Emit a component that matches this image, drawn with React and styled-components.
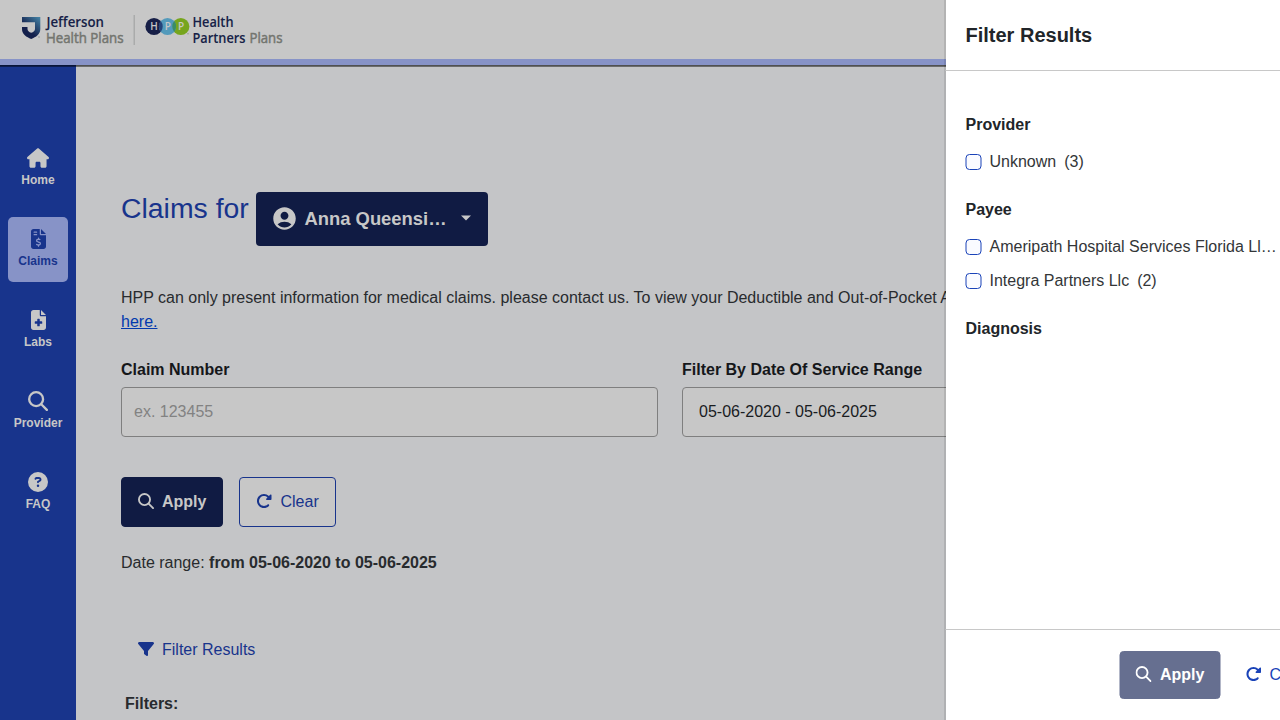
import React from "react";
import styled, { createGlobalStyle, css } from "styled-components";
import {
  FaHouse,
  FaFileInvoiceDollar,
  FaFileMedical,
  FaCircleQuestion,
  FaRotateRight,
  FaFilter,
} from "react-icons/fa6";
import { MdAccountCircle } from "react-icons/md";

const color = {
  page: "#c4c5c7",
  surface: "#c7c7c7",
  blue: "#18348c",
  brand: "#1a43b8",
  navy: "#101b43",
  lilac: "#8793c7",
  text: "#282b2e",
};

const GlobalStyle = createGlobalStyle`
  *, *::before, *::after { box-sizing: border-box; }
  html, body { margin: 0; height: 720px; overflow: hidden; }
  body {
    font-family: "Liberation Sans", Arial, sans-serif;
    font-size: 16px;
    line-height: 24px;
    color: ${color.text};
    background: ${color.page};
  }
  svg { display: block; flex: none; }
`;

const Page = styled.div`
  display: flex;
  flex-direction: column;
  height: 720px;
  overflow: hidden;
`;

const Header = styled.header`
  position: relative;
  z-index: 1;
  flex: none;
  height: 65px;
  background: ${color.surface};
  border-bottom: 6px solid ${color.lilac};
  box-shadow: 0 1px 0 rgba(0, 0, 0, 0.25), 0 2px 0 rgba(0, 0, 0, 0.45);
`;

const Body = styled.div`
  display: flex;
  flex: 1;
  min-height: 0;
`;

const Sidebar = styled.nav`
  display: flex;
  flex-direction: column;
  flex: none;
  gap: 16px;
  width: 76px;
  padding: 71px 8px 0;
  background: ${color.blue};
`;

const NavItem = styled.a`
  display: flex;
  flex-direction: column;
  align-items: center;
  height: 65px;
  padding-top: 12px;
  border-radius: 5px;
  font-size: 12px;
  font-weight: 700;
  line-height: 18px;
  color: ${(p) => (p.$active ? color.blue : color.surface)};
  background: ${(p) => (p.$active ? color.lilac : "transparent")};
  svg { width: ${(p) => p.$iconWidth}px; height: 20px; margin-bottom: 3px; }
`;

const Main = styled.main`
  flex: none;
  width: 1204px;
  padding: 127px 45px 0;
`;

const TitleRow = styled.div`
  display: flex;
  gap: 8px;
`;

const Title = styled.h1`
  margin: 0;
  font-size: 28.4px;
  font-weight: 400;
  line-height: 32px;
  width: 127px;
  white-space: nowrap;
  color: ${color.blue};
`;

const MemberButton = styled.button`
  display: flex;
  align-items: center;
  width: 232px;
  height: 54px;
  padding: 0 16px 1px 15px;
  border: 0;
  border-radius: 4px;
  font: 700 18.4px/24px "Liberation Sans", Arial, sans-serif;
  color: ${color.surface};
  background: ${color.navy};
`;

const MemberName = styled.span`
  flex: 1;
  margin-left: 6.5px;
  text-align: left;
`;

const Notice = styled.p`
  width: 1100px;
  margin: 40px 0 0;
  white-space: nowrap;
  a { color: #0339ae; text-decoration: underline; }
`;

const Fields = styled.div`
  display: flex;
  gap: 24px;
  margin-top: 24px;
`;

const Field = styled.label`
  display: block;
  width: 537px;
  font-weight: 700;
  color: #15171a;
`;

const Input = styled.input`
  display: block;
  width: 100%;
  height: 50px;
  margin-top: 5px;
  padding: 0 ${(p) => p.$inset || 12}px;
  border: 1px solid #7f7f7f;
  border-radius: 4px;
  font: 400 16px/24px "Liberation Sans", Arial, sans-serif;
  color: #191c1f;
  background: ${color.surface};
  &::placeholder { color: #828282; opacity: 1; }
`;

const Actions = styled.div`
  display: flex;
  gap: 16px;
  margin-top: 40px;
`;

const variants = {
  solid: css`
    color: ${color.surface};
    background: ${color.navy};
    border-color: ${color.navy};
    font-weight: 700;
  `,
  outline: css`
    gap: 8.5px;
    color: ${color.blue};
    background: ${color.surface};
    border-color: ${color.blue};
  `,
  disabled: css`
    gap: 8.5px;
    padding: 0 15px;
    color: #fff;
    background: #152356;
    border-color: #152356;
    font-weight: 700;
    opacity: 0.65;
  `,
  link: css`
    color: ${color.brand};
    background: transparent;
    border-color: transparent;
  `,
};

const Button = styled.button`
  display: flex;
  align-items: center;
  flex: none;
  gap: 8px;
  height: ${(p) => p.$height || 50}px;
  width: ${(p) => p.$width}px;
  padding: 0 16px;
  border: 1px solid;
  border-radius: 4px;
  font: 400 16px/24px "Liberation Sans", Arial, sans-serif;
  ${(p) => variants[p.$variant]}
  svg { margin-bottom: 2px; }
`;

const DateRange = styled.p`
  margin: 24px 0 0;
`;

const FilterLink = styled.a`
  display: flex;
  align-items: center;
  gap: 8px;
  margin: 63px 0 0 17px;
  color: ${color.blue};
  svg { margin-bottom: 2px; }
`;

const FiltersLabel = styled.div`
  margin: 30px 0 0 4px;
  font-weight: 700;
`;

const Drawer = styled.aside`
  position: fixed;
  z-index: 2;
  top: 0;
  right: 0;
  display: flex;
  flex-direction: column;
  width: 400px;
  height: 720px;
  border-left: 1px solid rgba(0, 0, 0, 0.2);
  background: #fff padding-box;
  color: #212529;
  transform: translateX(64.5px);
`;

const DrawerHeader = styled.div`
  height: 71px;
  padding: 20px 20px 0;
  border-bottom: 1px solid #c8c8c8;
  font-size: 20px;
  font-weight: 700;
  line-height: 30px;
`;

const DrawerBody = styled.div`
  flex: 1;
  padding: 42px 20px 0;
`;

const DrawerFooter = styled.div`
  display: flex;
  gap: 8px;
  height: 91px;
  padding: 21px 0 0 174px;
  border-top: 1px solid #c8c8c8;
`;

const GroupTitle = styled.h2`
  margin: 0 0 13px;
  font-size: 16px;
  font-weight: 700;
  line-height: 24px;
`;

const Group = styled.section`
  margin-bottom: 24px;
`;

const Option = styled.label`
  display: flex;
  align-items: center;
  height: 24px;
  margin-bottom: ${(p) => (p.$last ? 0 : 10)}px;
  color: #333638;
  white-space: pre;
`;

const Checkbox = styled.span`
  width: 16px;
  height: 16px;
  margin-right: 8px;
  border: 1px solid ${color.brand};
  border-radius: 4px;
  background: #fafbff;
`;

const OptionCount = styled.span`
  margin-left: 8px;
`;

function SearchIcon({ size = 16 }) {
  return (
    <svg width={size} height={size} viewBox="0 0 512 512" fill="none" stroke="currentColor" strokeWidth="60" strokeLinecap="round">
      <circle cx="208" cy="208" r="178" />
      <path d="M340 340L482 482" />
    </svg>
  );
}

function Logo() {
  const fit = { lengthAdjust: "spacingAndGlyphs" };
  return (
    <svg width="300" height="58" viewBox="0 0 300 58" fontFamily="'Open Sans', 'Noto Sans', sans-serif" fontSize="14.2">
      <defs>
        <linearGradient id="shield" x1="0.2" y1="0.9" x2="0.9" y2="0">
          <stop offset="0.3" stopColor="#14204c" />
          <stop offset="1" stopColor="#427fa2" />
        </linearGradient>
      </defs>
      <path
        d="M22 17H40.3V29C40.3 34.5 36 37 31.2 39C26.5 37 22 34.5 22 29V27H27.5V29C27.5 31 29 32 31.2 32.8C33.5 32 35 31 35 29V22.2H22Z"
        fill="url(#shield)"
      />
      <circle cx="39" cy="37" r="0.8" fill="#999" />
      <g fill="#171f47" fontWeight="600" stroke="#171f47" strokeWidth="0.1">
        <text x="46.5" y="27.3" textLength="57.5" {...fit}>Jefferson</text>
        <text x="192.5" y="27.3" textLength="41" {...fit}>Health</text>
        <text x="192.5" y="43.2" textLength="53" {...fit}>Partners</text>
      </g>
      <g fill="#73756f" fontWeight="500" stroke="#73756f" strokeWidth="0.5">
        <text x="46" y="43.2" textLength="77.5" {...fit}>Health Plans</text>
        <text x="249.5" y="43.2" textLength="33" {...fit}>Plans</text>
      </g>
      <rect x="133.5" y="15" width="1.5" height="30" fill="#aaabab" />
      <circle cx="154" cy="26.5" r="8.6" fill="#171f47" />
      <circle cx="180.8" cy="26.5" r="8.6" fill="#76a51d" />
      <circle cx="167.5" cy="26.5" r="8.6" fill="#539abb" />
      <path d="M160.8 21.1a8.6 8.6 0 0 1 0 10.8a8.6 8.6 0 0 1 0-10.8z" fill="#25447a" />
      <path d="M174.2 21.1a8.6 8.6 0 0 1 0 10.8a8.6 8.6 0 0 1 0-10.8z" fill="#3c8d65" />
      <circle cx="188" cy="33.8" r="0.8" fill="#999" />
      <g fill="#c7c7c7" fontSize="10" textAnchor="middle" fontWeight="600">
        <text x="154" y="30.2">H</text>
        <text x="167.8" y="30.2">P</text>
        <text x="181" y="30.2">P</text>
      </g>
    </svg>
  );
}

const navigation = [
  { label: "Home", icon: <FaHouse />, width: 22 },
  { label: "Claims", icon: <FaFileInvoiceDollar />, width: 15, active: true },
  { label: "Labs", icon: <FaFileMedical />, width: 15 },
  { label: "Provider", icon: <SearchIcon size={20} />, width: 20 },
  { label: "FAQ", icon: <FaCircleQuestion />, width: 20 },
];

const groups = [
  { title: "Provider", options: [["Unknown", "(3)"]] },
  {
    title: "Payee",
    options: [["Ameripath Hospital Services Florida Ll…", ""], ["Integra Partners Llc", "(2)"]],
  },
  { title: "Diagnosis", options: [] },
];

export default function App() {
  return (
    <>
      <GlobalStyle />
      <Page>
        <Header>
          <Logo />
        </Header>
        <Body>
          <Sidebar>
            {navigation.map((item) => (
              <NavItem key={item.label} $active={item.active} $iconWidth={item.width}>
                {item.icon}
                {item.label}
              </NavItem>
            ))}
          </Sidebar>
          <Main>
            <TitleRow>
              <Title>Claims for</Title>
              <MemberButton>
                <MdAccountCircle size={27} />
                <MemberName>Anna Queensi…</MemberName>
                <svg width="12" height="12" viewBox="0 0 12 12" fill="currentColor">
                  <path d="M1 2.5H11L6 7.5Z" />
                </svg>
              </MemberButton>
            </TitleRow>
            <Notice>
              HPP can only present information for medical claims. please contact us. To view your
              Deductible and Out-of-Pocket Accumulators, click
              <br />
              <a>here.</a>
            </Notice>
            <Fields>
              <Field>
                Claim Number
                <Input placeholder="ex. 123455" />
              </Field>
              <Field>
                Filter By Date Of Service Range
                <Input $inset={16} defaultValue="05-06-2020 - 05-06-2025" />
              </Field>
            </Fields>
            <Actions>
              <Button $variant="solid" $width={102}>
                <SearchIcon />
                Apply
              </Button>
              <Button $variant="outline" $width={97}>
                <FaRotateRight size={16} />
                Clear
              </Button>
            </Actions>
            <DateRange>
              Date range: <b>from 05-06-2020 to 05-06-2025</b>
            </DateRange>
            <FilterLink>
              <FaFilter size={16} />
              Filter Results
            </FilterLink>
            <FiltersLabel>Filters:</FiltersLabel>
          </Main>
        </Body>
      </Page>
      <Drawer>
        <DrawerHeader>Filter Results</DrawerHeader>
        <DrawerBody>
          {groups.map((group) => (
            <Group key={group.title}>
              <GroupTitle>{group.title}</GroupTitle>
              {group.options.map(([name, count], index) => (
                <Option key={name} $last={index === group.options.length - 1}>
                  <Checkbox />
                  {name}
                  {count && <OptionCount>{count}</OptionCount>}
                </Option>
              ))}
            </Group>
          ))}
        </DrawerBody>
        <DrawerFooter>
          <Button $variant="disabled" $width={101} $height={48}>
            <SearchIcon />
            Apply
          </Button>
          <Button $variant="link" $width={97} $height={48}>
            <FaRotateRight size={16} />
            Clear
          </Button>
        </DrawerFooter>
      </Drawer>
    </>
  );
}
